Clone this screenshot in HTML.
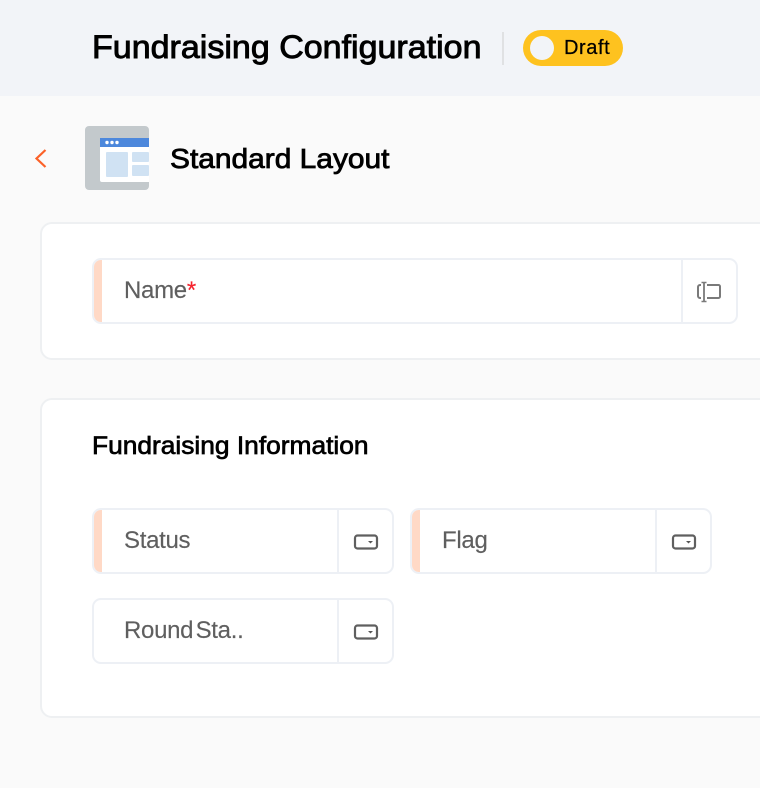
<!DOCTYPE html>
<html><head><meta charset="utf-8"><style>
html,body{margin:0;padding:0}
body{width:760px;height:788px;overflow:hidden;background:#fafafa;position:relative;font-family:"Liberation Sans",sans-serif}
.a{position:absolute;box-sizing:border-box}
.t{position:absolute;white-space:nowrap;line-height:1;transform-origin:0 50%}
.card{background:#fff;border:2px solid #eef0f2;border-radius:12px}
.f{background:#fff;border:2px solid #edf0f5;border-radius:9px;overflow:hidden}
.strip{position:absolute;left:0;top:0;bottom:0;width:8px;background:#ffd9c6}
.div{position:absolute;top:0;bottom:0;width:2px;background:#edf0f5}
.lab{color:#5f5f5f;font-size:24px;letter-spacing:-.3px;-webkit-text-stroke:.15px #5f5f5f}
</style></head><body>
<div class="a" style="left:0;top:0;width:760px;height:96px;background:#f2f4f8"></div>
<div class="t" style="left:92px;top:31px;font-size:32px;color:#000;-webkit-text-stroke:.9px #000;transform:scaleX(1.063)">Fundraising Configuration</div>
<div class="a" style="left:502px;top:32px;width:2px;height:33px;background:#e0e1e3"></div>
<div class="a" style="left:523px;top:30px;width:100px;height:36px;border-radius:18px;background:#fec21f"></div>
<div class="a" style="left:530px;top:36px;width:24px;height:24px;border-radius:50%;background:#f2f4f8"></div>
<div class="t" style="left:564px;top:38px;font-size:20px;color:#000;-webkit-text-stroke:.25px #000;letter-spacing:.6px">Draft</div>

<svg class="a" style="left:30px;top:145px" width="20" height="26" viewBox="0 0 20 26"><path d="M15.500 5 L6.500 13.500 L15.500 22" fill="none" stroke="#fb6128" stroke-width="2.200"/></svg>
<svg class="a" style="left:85px;top:125px" width="65" height="65" viewBox="0 0 65 65">
<rect x="0" y="1" width="64" height="64" rx="4" fill="#c3c9cc"/>
<path d="M15 13H64V57H17a2 2 0 0 1-2-2Z" fill="#fff"/>
<rect x="15" y="13" width="49" height="9" fill="#4d88dc"/>
<circle cx="22" cy="17.500" r="1.700" fill="#fff"/><circle cx="27" cy="17.500" r="1.700" fill="#fff"/><circle cx="32" cy="17.500" r="1.700" fill="#fff"/>
<rect x="21" y="27" width="22" height="25" rx="1" fill="#d0e2f3"/>
<rect x="47" y="27" width="17" height="10" rx="1" fill="#d0e2f3"/>
<rect x="47" y="40" width="17" height="11" rx="1" fill="#d0e2f3"/>
</svg>
<div class="t" style="left:170px;top:145px;font-size:28px;color:#000;-webkit-text-stroke:.8px #000;transform:scaleX(1.068)">Standard Layout</div>

<div class="a card" style="left:40px;top:222px;width:780px;height:138px"></div>
<div class="a f" style="left:92px;top:258px;width:646px;height:66px"><div class="strip"></div><div class="div" style="left:587px"></div></div>
<div class="t lab" style="left:124px;top:279px">Name<span style="color:#f5222d;-webkit-text-stroke:.15px #f5222d">*</span></div>
<svg class="a" style="left:696px;top:280px" width="26" height="24" viewBox="0 0 26 24" fill="none" stroke="#7a7a7a" stroke-width="2"><path d="M11 5H22.500a1.500 1.500 0 0 1 1.500 1.500V16.500a1.500 1.500 0 0 1-1.500 1.500H11"/><path d="M5 5H4a2 2 0 0 0-2 2V16a2 2 0 0 0 2 2H5"/><path d="M8 2.500V21.500" stroke-width="1.800"/><path d="M5.500 2.500H10.500M5.500 21.500H10.500" stroke-width="1.500"/></svg>

<div class="a card" style="left:40px;top:398px;width:780px;height:320px"></div>
<div class="t" style="left:92px;top:434px;font-size:25px;color:#000;-webkit-text-stroke:.7px #000;transform:scaleX(1.053)">Fundraising Information</div>

<div class="a f" style="left:92px;top:508px;width:302px;height:66px"><div class="strip"></div><div class="div" style="left:243px"></div></div>
<div class="t lab" style="left:124px;top:529px">Status</div>
<svg class="a" style="left:353px;top:533px" width="26" height="18" viewBox="0 0 26 18" fill="none"><rect x="2" y="2.500" width="22" height="13" rx="2.500" stroke="#5f5f5f" stroke-width="2.200"/><path d="M15 8H20L17.500 10.500Z" fill="#555"/></svg>

<div class="a f" style="left:410px;top:508px;width:302px;height:66px"><div class="strip"></div><div class="div" style="left:243px"></div></div>
<div class="t lab" style="left:442px;top:529px">Flag</div>
<svg class="a" style="left:671px;top:533px" width="26" height="18" viewBox="0 0 26 18" fill="none"><rect x="2" y="2.500" width="22" height="13" rx="2.500" stroke="#5f5f5f" stroke-width="2.200"/><path d="M15 8H20L17.500 10.500Z" fill="#555"/></svg>

<div class="a f" style="left:92px;top:598px;width:302px;height:66px"><div class="div" style="left:243px"></div></div>
<div class="t lab" style="left:124px;top:619px;word-spacing:-4px">Round Sta..</div>
<svg class="a" style="left:353px;top:623px" width="26" height="18" viewBox="0 0 26 18" fill="none"><rect x="2" y="2.500" width="22" height="13" rx="2.500" stroke="#5f5f5f" stroke-width="2.200"/><path d="M15 8H20L17.500 10.500Z" fill="#555"/></svg>
</body></html>
